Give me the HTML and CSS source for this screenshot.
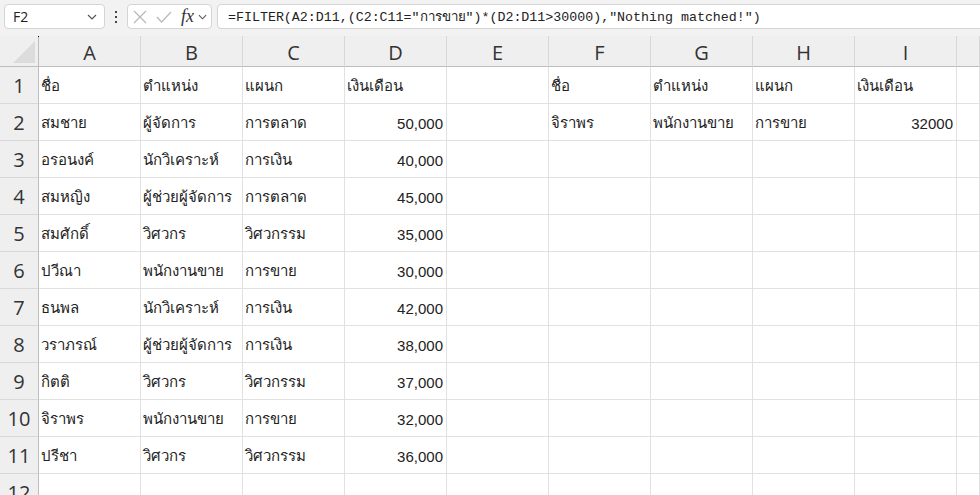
FILE: index.html
```html
<!DOCTYPE html>
<html lang="th">
<head>
  <meta charset="UTF-8" />
  <title>FILTER - Excel</title>
  <link rel="stylesheet" href="styles.css">
</head>
<body>
  <!-- formula bar -->
  <div class="toolbar">
    <div class="namebox">
      <span>F2</span>
      <svg class="chev" width="10" height="6" viewBox="0 0 10 6"><polyline points="1,1 5,5 9,1" /></svg>
    </div>
    <div class="dots"><i></i><i></i><i></i></div>
    <div class="fxbox">
      <svg width="14" height="14" viewBox="0 0 14 14" class="muted"><line x1="1" y1="1" x2="13" y2="13" /><line x1="13" y1="1" x2="1" y2="13" /></svg>
      <svg width="16" height="12" viewBox="0 0 16 12" class="muted"><polyline points="1,6 5.5,11 15,1" /></svg>
      <span class="fx">fx</span>
      <svg class="chev" width="9" height="6" viewBox="0 0 10 6"><polyline points="1,1 5,5 9,1" /></svg>
    </div>
    <div class="formula">=FILTER(A2:D11,(C2:C11="การขาย")*(D2:D11&gt;30000),"Nothing matched!")</div>
  </div>

  <!-- sheet grid -->
  <div class="sheet">
    <div class="corner"><span class="tri"></span></div>
    <div class="colhead">A</div><div class="colhead">B</div><div class="colhead">C</div><div class="colhead">D</div><div class="colhead">E</div>
    <div class="colhead">F</div><div class="colhead">G</div><div class="colhead">H</div><div class="colhead">I</div><div class="colhead"></div>

    <div class="rowhead">1</div>
    <div class="c">ชื่อ</div><div class="c">ตำแหน่ง</div><div class="c">แผนก</div><div class="c">เงินเดือน</div><div class="c"></div>
    <div class="c">ชื่อ</div><div class="c">ตำแหน่ง</div><div class="c">แผนก</div><div class="c">เงินเดือน</div><div class="c"></div>

    <div class="rowhead">2</div>
    <div class="c">สมชาย</div><div class="c">ผู้จัดการ</div><div class="c">การตลาด</div><div class="c num">50,000</div><div class="c"></div>
    <div class="c">จิราพร</div><div class="c">พนักงานขาย</div><div class="c">การขาย</div><div class="c num">32000</div><div class="c"></div>

    <div class="rowhead">3</div>
    <div class="c">อรอนงค์</div><div class="c">นักวิเคราะห์</div><div class="c">การเงิน</div><div class="c num">40,000</div><div class="c"></div>
    <div class="c"></div><div class="c"></div><div class="c"></div><div class="c"></div><div class="c"></div>

    <div class="rowhead">4</div>
    <div class="c">สมหญิง</div><div class="c">ผู้ช่วยผู้จัดการ</div><div class="c">การตลาด</div><div class="c num">45,000</div><div class="c"></div>
    <div class="c"></div><div class="c"></div><div class="c"></div><div class="c"></div><div class="c"></div>

    <div class="rowhead">5</div>
    <div class="c">สมศักดิ์</div><div class="c">วิศวกร</div><div class="c">วิศวกรรม</div><div class="c num">35,000</div><div class="c"></div>
    <div class="c"></div><div class="c"></div><div class="c"></div><div class="c"></div><div class="c"></div>

    <div class="rowhead">6</div>
    <div class="c">ปวีณา</div><div class="c">พนักงานขาย</div><div class="c">การขาย</div><div class="c num">30,000</div><div class="c"></div>
    <div class="c"></div><div class="c"></div><div class="c"></div><div class="c"></div><div class="c"></div>

    <div class="rowhead">7</div>
    <div class="c">ธนพล</div><div class="c">นักวิเคราะห์</div><div class="c">การเงิน</div><div class="c num">42,000</div><div class="c"></div>
    <div class="c"></div><div class="c"></div><div class="c"></div><div class="c"></div><div class="c"></div>

    <div class="rowhead">8</div>
    <div class="c">วราภรณ์</div><div class="c">ผู้ช่วยผู้จัดการ</div><div class="c">การเงิน</div><div class="c num">38,000</div><div class="c"></div>
    <div class="c"></div><div class="c"></div><div class="c"></div><div class="c"></div><div class="c"></div>

    <div class="rowhead">9</div>
    <div class="c">กิตติ</div><div class="c">วิศวกร</div><div class="c">วิศวกรรม</div><div class="c num">37,000</div><div class="c"></div>
    <div class="c"></div><div class="c"></div><div class="c"></div><div class="c"></div><div class="c"></div>

    <div class="rowhead">10</div>
    <div class="c">จิราพร</div><div class="c">พนักงานขาย</div><div class="c">การขาย</div><div class="c num">32,000</div><div class="c"></div>
    <div class="c"></div><div class="c"></div><div class="c"></div><div class="c"></div><div class="c"></div>

    <div class="rowhead">11</div>
    <div class="c">ปรีชา</div><div class="c">วิศวกร</div><div class="c">วิศวกรรม</div><div class="c num">36,000</div><div class="c"></div>
    <div class="c"></div><div class="c"></div><div class="c"></div><div class="c"></div><div class="c"></div>

    <div class="rowhead">12</div>
    <div class="c"></div><div class="c"></div><div class="c"></div><div class="c"></div><div class="c"></div>
    <div class="c"></div><div class="c"></div><div class="c"></div><div class="c"></div><div class="c"></div>
  </div>
</body>
</html>
```

FILE: styles.css
```css
* {
  box-sizing: border-box;
}
body {
  margin: 0;
  width: 980px;
  height: 495px;
  overflow: hidden;
  background: #f2f2f2;
  font-family: "Open Sans", "Noto Sans", sans-serif;
  color: #222;
}

/* formula bar */
.toolbar {
  display: flex;
  align-items: center;
  height: 36px;
  padding: 0 0 3px 4px;
  background: #f2f2f2;
}
.namebox, .fxbox, .formula {
  height: 25px;
  background: #fff;
  border: 1px solid #d4d4d4;
  border-radius: 4px;
  display: flex;
  align-items: center;
}
.namebox {
  width: 101px;
  padding: 0 7px 0 8px;
  justify-content: space-between;
  font-size: 14px;
  color: #222;
}
.chev polyline {
  fill: none;
  stroke: #555;
  stroke-width: 1.2;
}
.dots {
  width: 22px;
  display: flex;
  flex-direction: column;
  align-items: center;
  gap: 3px;
}
.dots i {
  width: 2px;
  height: 2px;
  background: #444;
}
.fxbox {
  width: 85px;
  padding: 0 3px 0 5px;
  gap: 9px;
}
.muted line, .muted polyline {
  fill: none;
  stroke: #b8b8b8;
  stroke-width: 1.2;
}
.fx {
  font-family: "Liberation Serif", serif;
  font-style: italic;
  font-size: 18px;
  color: #333;
  margin-right: -5px;
}
.formula {
  flex: 1;
  margin-left: 5px;
  margin-right: -10px;
  padding-left: 10px;
  font-family: "Liberation Mono", "DejaVu Sans Mono", monospace;
  font-size: 13.3px;
  color: #222;
}

/* grid */
.sheet {
  display: grid;
  grid-template-columns: 39px repeat(9, 102px) 1fr;
  grid-template-rows: 31px repeat(12, 37px);
  background: #fff;
}
.corner, .colhead, .rowhead {
  background: #efefef;
  color: #333;
  font-size: 20px;
}
.corner {
  position: relative;
  border-right: 1px solid #bdbdbd;
  border-bottom: 1px solid #bdbdbd;
}
.corner::before {
  content: "";
  position: absolute;
  left: 38px;
  top: 0;
  width: 1px;
  height: 1px;
  background: #000;
}
.tri {
  position: absolute;
  right: 3px;
  bottom: 3px;
  width: 0;
  height: 0;
  border-left: 22px solid transparent;
  border-bottom: 22px solid #dcdcdc;
}
.colhead {
  display: flex;
  align-items: center;
  justify-content: center;
  border-right: 1px solid #d8d8d8;
  border-bottom: 1px solid #bdbdbd;
  padding-top: 2px;
}
.rowhead {
  display: flex;
  align-items: center;
  justify-content: center;
  border-right: 1px solid #bdbdbd;
  border-bottom: 1px solid #d8d8d8;
  padding-top: 1px;
}
.c {
  display: flex;
  align-items: center;
  padding: 2px 3px 0 2px;
  border-right: 1px solid #e1e1e1;
  border-bottom: 1px solid #e1e1e1;
  font-family: "Liberation Sans Narrow", "Liberation Sans", sans-serif;
  font-size: 15px;
  color: #222;
  white-space: nowrap;
  overflow: hidden;
}
.c.num {
  justify-content: flex-end;
}
```
